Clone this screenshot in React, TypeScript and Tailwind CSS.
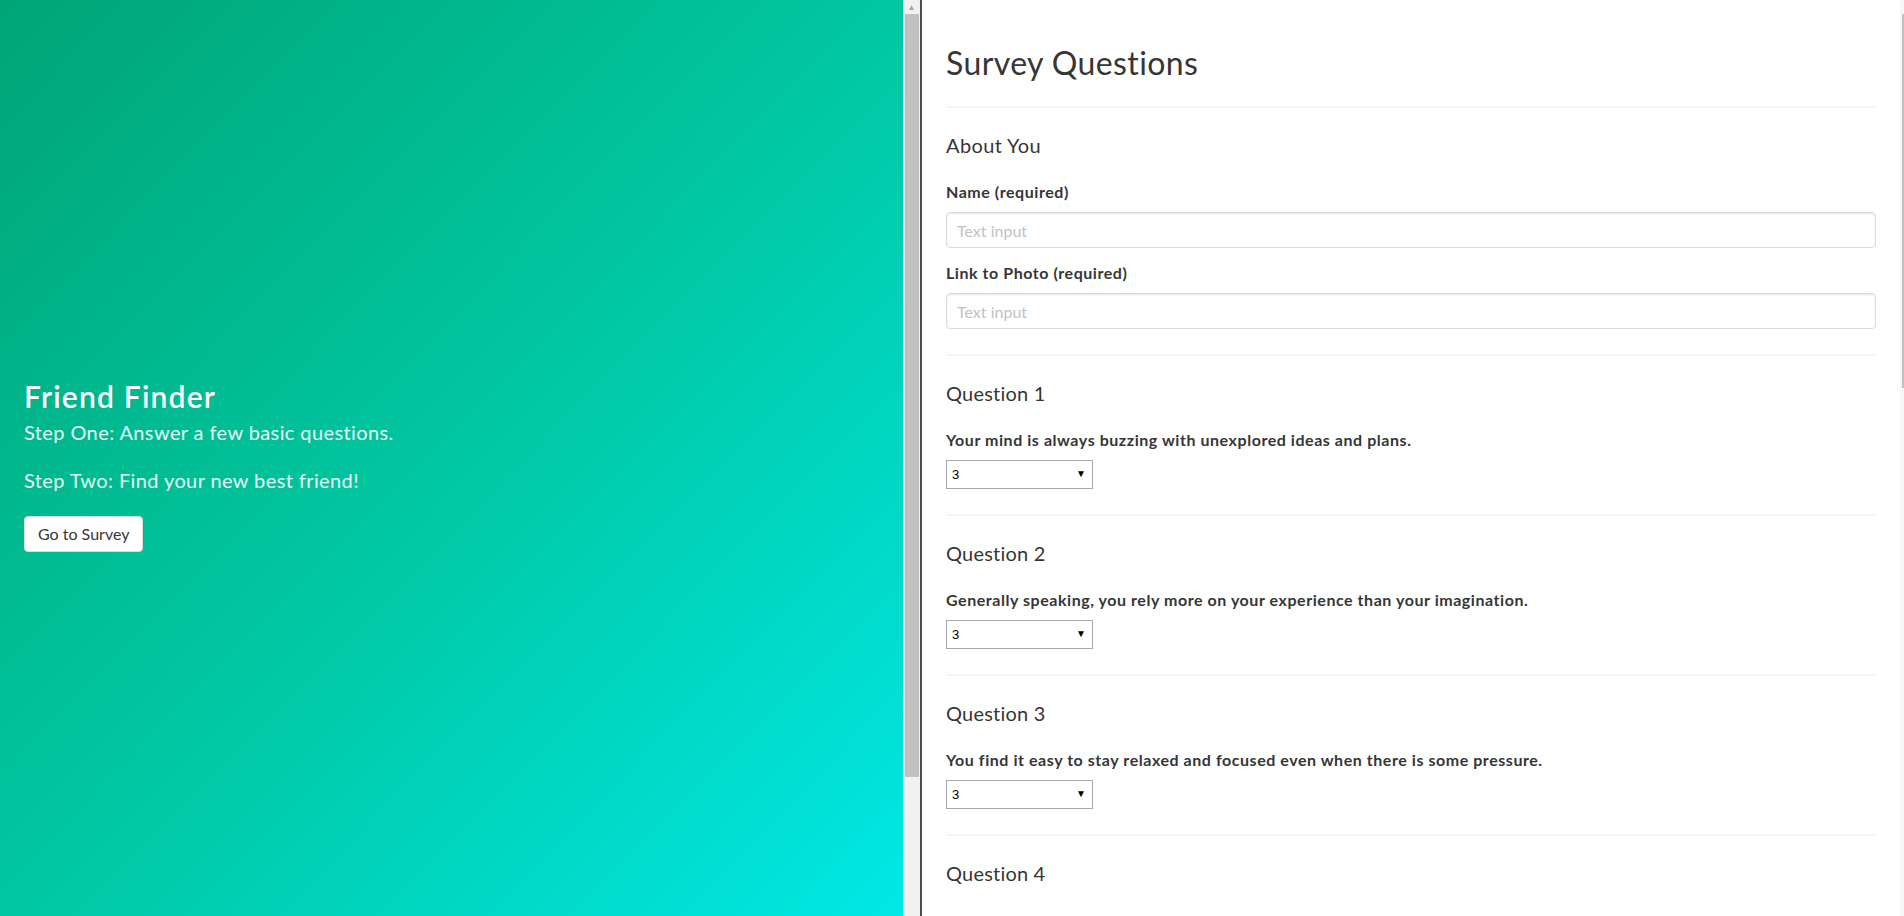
import React from "react";

const FONT = { fontFamily: '"Segoe UI", Lato, "Liberation Sans", sans-serif' };

const questions = [
  "Your mind is always buzzing with unexplored ideas and plans.",
  "Generally speaking, you rely more on your experience than your imagination.",
  "You find it easy to stay relaxed and focused even when there is some pressure.",
];

/* ---------------- small pieces ---------------- */

function Rule() {
  return <div className="h-[2px] bg-[#f5f5f5]" />;
}

function TextField({ label, first }: { label: string; first?: boolean }) {
  return (
    <div className={first ? "mt-[25px]" : "mt-[15px]"}>
      <label className="block font-bold text-[16px] leading-[20px] tracking-[0.55px] text-[#363636]">
        {label}
      </label>
      <input
        type="text"
        placeholder="Text input"
        className="mt-[10px] block w-full h-[36px] px-[10px] text-[16px] text-[#363636] bg-white border border-[#dbdbdb] rounded-[4px] shadow-[inset_0_1px_2px_rgba(10,10,10,0.1)] placeholder:text-[#c2c2c2] focus:outline-none"
      />
    </div>
  );
}

function Question({ n, text }: { n: number; text: string }) {
  return (
    <section>
      <Rule />
      <div className="pt-[25px] pb-[25px]">
        <h5 className="text-[20px] leading-[24px] tracking-[0.2px] text-[#363636]">Question {n}</h5>
        <label className="mt-[25px] block font-bold text-[16px] leading-[20px] tracking-[0.55px] text-[#363636]">
          {text}
        </label>
        <div className="relative mt-[10px] w-[147px]">
          <select
            defaultValue="3"
            className="block w-full h-[29px] pl-[5px] text-[13px] text-black bg-white border border-[#a9a9a9] appearance-none rounded-none focus:outline-none"
            style={{ fontFamily: '"Liberation Sans", Arial, sans-serif' }}
          >
            <option value="1">1</option>
            <option value="2">2</option>
            <option value="3">3</option>
            <option value="4">4</option>
            <option value="5">5</option>
          </select>
          <span className="pointer-events-none absolute right-[7px] top-[8px] text-[10px] leading-none text-black">
            ▼
          </span>
        </div>
      </div>
    </section>
  );
}

/* ---------------- page ---------------- */

export default function App() {
  return (
    <div className="flex h-screen overflow-hidden bg-white" style={FONT}>
      {/* Hero */}
      <div className="w-[903px] shrink-0 flex flex-col justify-center pt-[14px] px-[24px] bg-linear-to-br from-[#00a576] via-[#00c7a2] to-[#00e8e6]">
        <h1 className="text-[30px] leading-[36px] font-semibold tracking-[1.2px] text-white">
          Friend Finder
        </h1>
        <p className="mt-[6px] text-[20px] leading-[24px] tracking-[0.4px] text-white/90">
          Step One: Answer a few basic questions.
          <br />
          <br />
          Step Two: Find your new best friend!
        </p>
        <div className="mt-[24px]">
          <button className="h-[36px] px-[13px] text-[16px] text-[#363636] bg-white border border-[#dbdbdb] rounded-[4px]">
            Go to Survey
          </button>
        </div>
      </div>

      {/* left pane scrollbar */}
      <div className="w-[17px] shrink-0 bg-[#f1f1f1] flex flex-col items-center">
        <div className="h-[14px] flex items-center justify-center text-[8px] text-[#a3a3a3] leading-none">
          ▲
        </div>
        <div className="w-[14px] h-[763px] bg-[#c1c1c1]" />
      </div>
      <div className="w-[2px] shrink-0 bg-[#4d4d4d]" />

      {/* Survey */}
      <main className="flex-1 px-[24px] pt-[44px]">
        <h2 className="text-[32px] leading-[38px] tracking-[0.4px] text-[#363636]">Survey Questions</h2>
        <div className="mt-[24px]">
          <Rule />
          <div className="pt-[25px] pb-[25px]">
            <h5 className="text-[20px] leading-[24px] tracking-[0.4px] text-[#363636]">About You</h5>
            <TextField label="Name (required)" first />
            <TextField label="Link to Photo (required)" />
          </div>
          {questions.map((q, i) => (
            <Question key={i} n={i + 1} text={q} />
          ))}
          <section>
            <Rule />
            <div className="pt-[25px]">
              <h5 className="text-[20px] leading-[24px] tracking-[0.2px] text-[#363636]">Question 4</h5>
            </div>
          </section>
        </div>
      </main>

      {/* window scrollbar edge */}
      <div className="w-[4px] shrink-0 bg-[#f7f7f7] flex justify-end">
        <div className="mt-[14px] w-[2px] h-[374px] bg-[#c1c1c1]" />
      </div>
    </div>
  );
}
